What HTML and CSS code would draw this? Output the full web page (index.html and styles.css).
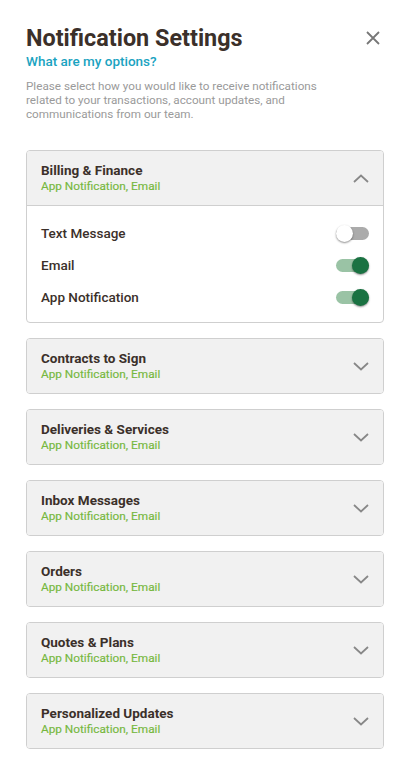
FILE: index.html
```html
<!DOCTYPE html>
<html lang="en">
<head>
    <meta charset="UTF-8">
    <meta name="viewport" content="width=device-width, initial-scale=1.0">
    <title>Notification Settings</title>
    <link rel="stylesheet" href="styles.css">
</head>
<body>
    <div class="container">
        <div class="top-row">
            <h1 class="title">Notification Settings</h1>
            <button class="close-btn" aria-label="Close">
                <svg width="14" height="14" viewBox="0 0 14 14"><path d="M1 1L13 13M13 1L1 13" stroke="#777" stroke-width="1.8" fill="none"/></svg>
            </button>
        </div>
        <a class="options-link" href="#">What are my options?</a>
        <p class="intro">Please select how you would like to receive notifications related to your transactions, account updates, and communications from our team.</p>

        <div class="card open">
            <div class="card-header">
                <div>
                    <div class="card-title">Billing &amp; Finance</div>
                    <div class="card-sub">App Notification, Email</div>
                </div>
                <svg class="chevron" width="16" height="9" viewBox="0 0 16 9"><path d="M1 8L8 1.5L15 8" stroke="#888" stroke-width="1.8" fill="none"/></svg>
            </div>
            <div class="card-body">
                <div class="option-row">
                    <span>Text Message</span>
                    <span class="toggle"></span>
                </div>
                <div class="option-row">
                    <span>Email</span>
                    <span class="toggle on"></span>
                </div>
                <div class="option-row">
                    <span>App Notification</span>
                    <span class="toggle on"></span>
                </div>
            </div>
        </div>

        <div class="card">
            <div class="card-header">
                <div>
                    <div class="card-title">Contracts to Sign</div>
                    <div class="card-sub">App Notification, Email</div>
                </div>
                <svg class="chevron" width="16" height="9" viewBox="0 0 16 9"><path d="M1 1L8 7.5L15 1" stroke="#888" stroke-width="1.8" fill="none"/></svg>
            </div>
        </div>

        <div class="card">
            <div class="card-header">
                <div>
                    <div class="card-title">Deliveries &amp; Services</div>
                    <div class="card-sub">App Notification, Email</div>
                </div>
                <svg class="chevron" width="16" height="9" viewBox="0 0 16 9"><path d="M1 1L8 7.5L15 1" stroke="#888" stroke-width="1.8" fill="none"/></svg>
            </div>
        </div>

        <div class="card">
            <div class="card-header">
                <div>
                    <div class="card-title">Inbox Messages</div>
                    <div class="card-sub">App Notification, Email</div>
                </div>
                <svg class="chevron" width="16" height="9" viewBox="0 0 16 9"><path d="M1 1L8 7.5L15 1" stroke="#888" stroke-width="1.8" fill="none"/></svg>
            </div>
        </div>

        <div class="card">
            <div class="card-header">
                <div>
                    <div class="card-title">Orders</div>
                    <div class="card-sub">App Notification, Email</div>
                </div>
                <svg class="chevron" width="16" height="9" viewBox="0 0 16 9"><path d="M1 1L8 7.5L15 1" stroke="#888" stroke-width="1.8" fill="none"/></svg>
            </div>
        </div>

        <div class="card">
            <div class="card-header">
                <div>
                    <div class="card-title">Quotes &amp; Plans</div>
                    <div class="card-sub">App Notification, Email</div>
                </div>
                <svg class="chevron" width="16" height="9" viewBox="0 0 16 9"><path d="M1 1L8 7.5L15 1" stroke="#888" stroke-width="1.8" fill="none"/></svg>
            </div>
        </div>

        <div class="card">
            <div class="card-header">
                <div>
                    <div class="card-title">Personalized Updates</div>
                    <div class="card-sub">App Notification, Email</div>
                </div>
                <svg class="chevron" width="16" height="9" viewBox="0 0 16 9"><path d="M1 1L8 7.5L15 1" stroke="#888" stroke-width="1.8" fill="none"/></svg>
            </div>
        </div>
    </div>
</body>
</html>
```

FILE: styles.css
```css
body {
    font-family: Roboto, "Noto Sans", Arial, sans-serif;
    margin: 0;
    background-color: #fff;
    color: #3b302a;
}
.container {
    padding: 24px 27px 20px 26px;
}
.top-row {
    display: flex;
    justify-content: space-between;
    align-items: center;
}
.title {
    margin: 0;
    font-size: 23.4px;
    line-height: 28px;
    font-weight: 700;
    color: #3b302a;
}
.close-btn {
    background: none;
    border: none;
    padding: 0;
    margin-right: 4px;
    display: flex;
    cursor: pointer;
}
.options-link {
    display: block;
    font-size: 13.5px;
    line-height: 18px;
    font-weight: 500;
    color: #1aa3c1;
    text-decoration: none;
}
.intro {
    margin: 9px 0 29px;
    font-size: 11.7px;
    line-height: 14px;
    color: #9a9a9a;
    padding-right: 40px;
}
.card {
    border: 1px solid #cfcfcf;
    border-radius: 4px;
    overflow: hidden;
    margin-bottom: 15px;
}
.card-header {
    display: flex;
    justify-content: space-between;
    align-items: center;
    padding: 11px 14px;
    background-color: #f1f1f1;
}
.card.open .card-header {
    border-bottom: 1px solid #cfcfcf;
}
.card-title {
    font-size: 13.5px;
    line-height: 16px;
    font-weight: 700;
}
.card-sub {
    font-size: 11.8px;
    line-height: 16px;
    font-weight: 400;
    color: #76b83e;
    -webkit-text-stroke: 0.15px #76b83e;
}
.chevron {
    flex-shrink: 0;
}
.card-body {
    padding: 11px 14px 9px 14px;
}
.option-row {
    display: flex;
    justify-content: space-between;
    align-items: center;
    height: 32px;
    font-size: 13.5px;
    font-weight: 500;
}
.toggle {
    position: relative;
    width: 33px;
    height: 13px;
    border-radius: 7px;
    background-color: #ababab;
}
.toggle::after {
    content: "";
    position: absolute;
    top: -2px;
    left: 0;
    width: 17px;
    height: 17px;
    border-radius: 50%;
    background-color: #fff;
    box-shadow: 0 1px 2px rgba(0, 0, 0, 0.45);
}
.toggle.on {
    background-color: #9ac3a5;
}
.toggle.on::after {
    left: auto;
    right: 0;
    background-color: #1a7242;
}
```
